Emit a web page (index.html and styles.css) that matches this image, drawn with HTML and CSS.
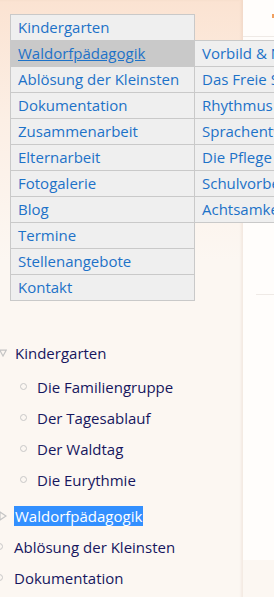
FILE: index.html
```html
<!DOCTYPE html>
<html lang="de">
<head>
  <meta charset="UTF-8" />
  <title>Waldorfkindergarten</title>
  <link rel="stylesheet" href="styles.css">
</head>
<body>
  <div class="layout">
    <!-- linke Spalte -->
    <div class="side">
      <ul class="menu">
        <li><a href="#">Kindergarten</a></li>
        <li class="active">
          <a href="#">Waldorfpädagogik</a>
          <ul class="submenu">
            <li><a href="#">Vorbild &amp; Nachahmung</a></li>
            <li><a href="#">Das Freie Spiel</a></li>
            <li><a href="#">Rhythmus</a></li>
            <li><a href="#">Sprachentwicklung</a></li>
            <li><a href="#">Die Pflege</a></li>
            <li><a href="#">Schulvorbereitung</a></li>
            <li><a href="#">Achtsamkeit</a></li>
          </ul>
        </li>
        <li><a href="#">Ablösung der Kleinsten</a></li>
        <li><a href="#">Dokumentation</a></li>
        <li><a href="#">Zusammenarbeit</a></li>
        <li><a href="#">Elternarbeit</a></li>
        <li><a href="#">Fotogalerie</a></li>
        <li><a href="#">Blog</a></li>
        <li><a href="#">Termine</a></li>
        <li><a href="#">Stellenangebote</a></li>
        <li><a href="#">Kontakt</a></li>
      </ul>

      <!-- Baumansicht -->
      <ul class="tree">
        <li>
          <div class="node">
            <svg class="mark" width="8" height="8" viewBox="0 0 8 8"><path d="M0.8 1.2 H7.2 L4 7 Z" fill="none" stroke="#c4c4c4" stroke-width="1.2"/></svg>
            <span>Kindergarten</span>
          </div>
          <ul class="children">
            <li class="node"><span class="dot"></span><span>Die Familiengruppe</span></li>
            <li class="node"><span class="dot"></span><span>Der Tagesablauf</span></li>
            <li class="node"><span class="dot"></span><span>Der Waldtag</span></li>
            <li class="node"><span class="dot"></span><span>Die Eurythmie</span></li>
          </ul>
        </li>
        <li class="node">
          <svg class="mark" width="8" height="10" viewBox="0 0 8 10"><path d="M1 1 V9 L7 5 Z" fill="none" stroke="#c4c4c4" stroke-width="1.2"/></svg>
          <span class="selected">Waldorfpädagogik</span>
        </li>
        <li class="node"><span class="dot top"></span><span>Ablösung der Kleinsten</span></li>
        <li class="node"><span class="dot top"></span><span>Dokumentation</span></li>
      </ul>
    </div>

    <!-- Inhalt -->
    <div class="main">
      <div class="rule first"></div>
      <span class="tick"></span>
      <div class="rule second"></div>
    </div>
  </div>
</body>
</html>
```

FILE: styles.css
```css
html, body {
  margin: 0;
  padding: 0;
  background: #fcf7f2;
  font-family: "Open Sans", "Noto Sans", sans-serif;
  font-size: 15px;
  overflow: hidden;
}

ul {
  list-style: none;
  margin: 0;
  padding: 0;
}

.layout {
  display: grid;
  grid-template-columns: 243px 1fr;
  align-items: start;
}

/* linke Spalte */
.side {
  background: linear-gradient(to bottom, #fbe3d2 0px, #fcefe5 120px, #fcf7f2 260px, #fcf7f2 100%);
  padding: 14px 0 40px;
  box-shadow: inset -2px 0 2px rgba(200, 170, 150, 0.15);
}

/* Dropdown-Menü */
.menu {
  margin-left: 10px;
  width: 183px;
  border: 1px solid #c9c9c9;
  border-bottom: none;
  background: #efefef;
}
.menu li {
  position: relative;
}
.menu > li {
  border-bottom: 1px solid #c9c9c9;
}
.menu a {
  display: block;
  height: 25px;
  line-height: 25px;
  padding-left: 7px;
  color: #1d72c8;
  text-decoration: none;
  white-space: nowrap;
}
.menu > li.active > a {
  background: #c9c9c9;
  text-decoration: underline;
}

.submenu {
  position: absolute;
  top: -1px;
  left: 183px;
  width: 180px;
  background: #efefef;
  border: 1px solid #c9c9c9;
  border-bottom: none;
  z-index: 2;
}
.submenu li {
  border-bottom: 1px solid #c9c9c9;
}

/* Baum */
.tree {
  margin-top: 36px;
  color: #16165e;
}
.tree .node {
  display: flex;
  align-items: center;
  height: 31px;
  white-space: nowrap;
}
.tree > li > .node,
.tree > li.node {
  margin-left: -1px;
  gap: 8px;
}
.mark {
  flex: none;
  width: 8px;
}
.children {
  margin: 3px 0 5px;
}
.children .node {
  padding-left: 20px;
  gap: 10px;
}
.dot {
  flex: none;
  width: 5px;
  height: 5px;
  border: 1.3px solid #c8c8c8;
  border-radius: 50%;
}
.dot.top {
  margin-left: -3px;
  margin-right: 3px;
}
.selected {
  background: #3390ff;
  color: #fff;
  margin-left: -1px;
  padding: 0 1px;
}

/* Inhalt rechts */
.main {
  height: 560px;
  background: #fffdfb;
}
.rule {
  height: 1px;
  background: #efeae6;
}
.rule.first {
  margin-top: 36px;
}
.tick {
  display: block;
  margin: -23px 0 0 29px;
  width: 2px;
  height: 4px;
  background: #f0a060;
}
.rule.second {
  margin: 276px 0 0 13px;
}
```
